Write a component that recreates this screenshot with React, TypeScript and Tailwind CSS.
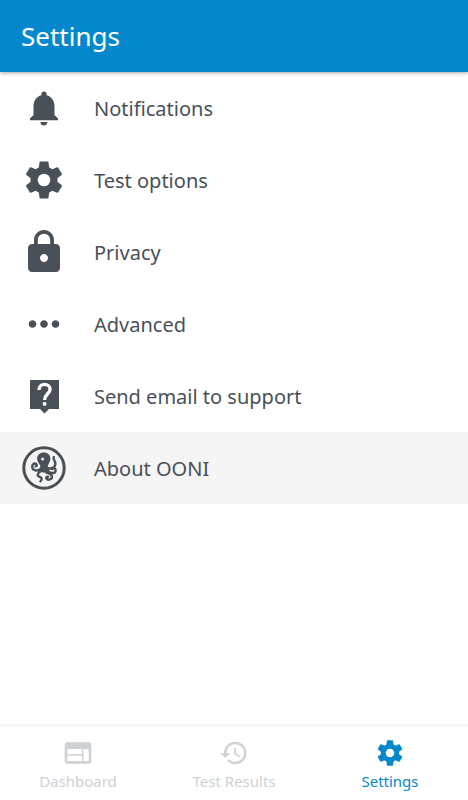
import type { ReactNode } from 'react'
import { MdHistory, MdLock, MdMoreHoriz, MdNotifications, MdWeb } from 'react-icons/md'

interface SettingsItem {
  label: string
  icon: ReactNode
  active?: boolean
}

const toothAngles = [0, 60, 120, 180, 240, 300]

function GearIcon({ className }: { className?: string }) {
  return (
    <svg viewBox="0 0 38 38" className={className} aria-hidden="true">
      <circle cx="19" cy="19" r="9.900" fill="none" stroke="currentColor" strokeWidth="7.200" />
      {toothAngles.map((angle) => (
        <path
          key={angle}
          fill="currentColor"
          transform={`rotate(${angle} 19 19)`}
          d="M15.400.500h7.200q.8 0 .9.800l1 7.700H13.500l1-7.700q.1-.8.900-.8z"
        />
      ))}
    </svg>
  )
}

function HelpIcon() {
  return (
    <svg viewBox="0 0 30 36" className="h-9 w-[30px]" aria-hidden="true">
      <path fill="currentColor" d="M1 2h29v29H20l-4.500 4.500L11 31H1z" />
      <path
        fill="none"
        stroke="#fff"
        strokeWidth="3.400"
        d="M10 12c0-3.500 2.300-5.600 5.500-5.600s5.500 2 5.500 5c0 4.200-5.400 4.800-5.400 10.600"
      />
      <path fill="#fff" d="M13.900 24.200h3.400v3.400h-3.400z" />
    </svg>
  )
}

function OctopusIcon() {
  return (
    <svg viewBox="0 0 44 44" className="size-11" fill="none" stroke="currentColor" strokeLinecap="round" aria-hidden="true">
      <circle cx="22" cy="22" r="20.200" strokeWidth="3" />
      <path
        fill="currentColor"
        stroke="none"
        d="M21.800 6.500c-4 0-6.700 2.700-6.700 6.200 0 3 2.300 4.600 3.100 6.800.6 2-.8 4-1.700 6.200l5.300.9 5.700-.9c-.9-2.300-2.200-4-1.500-6.300.6-2 2.400-3.500 2.400-6.700 0-3.500-2.600-6.200-6.600-6.200z"
      />
      <circle cx="20.600" cy="13" r="1.500" fill="#f5f5f5" stroke="none" />
      <path
        strokeWidth="2.400"
        d="M18.500 22.800c-2.800 2.800-7.700 2-8.300-1.500-.5-2.800 2.300-4.900 4.100-3.200 1 1 .4 2.300-.7 2.300M25 21.800c4 1.700 8.200-.2 8.400-4.200.1-2.900-2.700-3.700-1.600-6.600M26 24.500c2 3.300 7 3.300 7.600.4.500-2.400-2.300-3.600-3.400-1.800M18.500 25.500c-2.600 1.200-3.800 4.300-1.400 5.200 2.700.8 3.600 2.400 1.300 4.600M24 26c2 1.700 6 1.700 6 4.700 0 2.700-4 3.900-5.500 2-.8-1.300.4-2.500 1.600-1.800"
      />
    </svg>
  )
}

const items: SettingsItem[] = [
  { label: 'Notifications', icon: <MdNotifications className="size-[42px]" /> },
  { label: 'Test options', icon: <GearIcon className="size-[38px]" /> },
  { label: 'Privacy', icon: <MdLock className="size-12" /> },
  { label: 'Advanced', icon: <MdMoreHoriz className="size-[46px]" /> },
  { label: 'Send email to support', icon: <HelpIcon /> },
  { label: 'About OONI', icon: <OctopusIcon />, active: true },
]

const tabs = [
  { label: 'Dashboard', icon: <MdWeb className="size-8" />, active: false },
  { label: 'Test Results', icon: <MdHistory className="size-[30px]" />, active: false },
  { label: 'Settings', icon: <GearIcon className="size-[26px]" />, active: true },
]

export default function App() {
  return (
    <div className="flex min-h-screen flex-col bg-white font-['Noto_Sans',sans-serif] text-[#495057]">
      <header className="flex h-[72px] items-center bg-[#0588cb] px-[21px] shadow-[0_1px_4px_rgba(0,0,0,0.35)]">
        <h1 className="text-[26px] leading-8 text-white">Settings</h1>
      </header>

      <main className="flex-1">
        <ul>
          {items.map((item) => (
            <li key={item.label}>
              <button
                type="button"
                className={`flex h-[72px] w-full items-center gap-[26px] px-5 text-left text-xl ${item.active ? 'bg-[#f5f5f5]' : 'bg-transparent'}`}
              >
                <span className="flex w-12 shrink-0 justify-center">{item.icon}</span>
                <span className="pt-0.5">{item.label}</span>
              </button>
            </li>
          ))}
        </ul>
      </main>

      <nav className="grid grid-cols-3 border-t-3 border-[#f7f7f7]">
        {tabs.map((tab) => (
          <a
            key={tab.label}
            href="#"
            className={`flex h-[73px] flex-col items-center pt-2.5 text-[15px] leading-6 ${tab.active ? 'text-[#0588cb]' : 'text-[#ced1d5]'}`}
          >
            <span className="flex h-8 items-center">{tab.icon}</span>
            <span>{tab.label}</span>
          </a>
        ))}
      </nav>
    </div>
  )
}
